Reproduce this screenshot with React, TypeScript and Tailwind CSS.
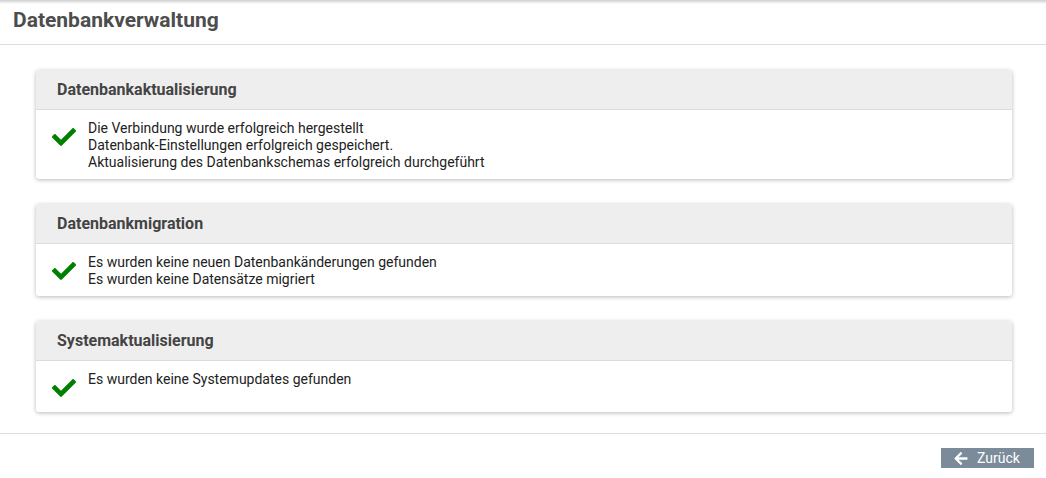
import React from "react";

const Check = () => (
  <svg width="24" height="20" viewBox="0 60 512 392" className="block">
    <path
      fill="#008000"
      d="M173.898 439.404l-166.4-166.4c-9.997-9.997-9.997-26.206 0-36.204l36.203-36.204c9.997-9.998 26.207-9.998 36.204 0L192 312.69 432.095 72.596c9.997-9.997 26.207-9.997 36.204 0l36.203 36.204c9.997 9.997 9.997 26.206 0 36.204l-294.4 294.401c-9.998 9.997-26.207 9.997-36.204-.001z"
    />
  </svg>
);

const Card = ({ title, lines }: { title: string; lines: string[] }) => (
  <div className="bg-white rounded-[3px] shadow-[0_1px_4px_rgba(0,0,0,0.28)]">
    <div className="h-10 bg-[#eeeeee] border-b border-[#dcdcdc] rounded-t-[3px] flex items-center px-[21px] text-[16px] font-bold text-[#444444] pt-[1px]">
      {title}
    </div>
    <div className="flex pt-[9px] pb-[9px]">
      <div className="w-[52px] pl-[16px] pt-[8px] min-h-[33px] shrink-0">
        <Check />
      </div>
      <div className="text-[14px] leading-[17px] text-[#222222] pt-[1px] -mb-[1px]">
        {lines.map((l) => (
          <div key={l}>{l}</div>
        ))}
      </div>
    </div>
  </div>
);

export default function App() {
  return (
    <div className="w-[1046px] h-[478px] bg-white relative" style={{ fontFamily: "Roboto, 'Liberation Sans', sans-serif" }}>
      <div className="h-[45px] border-b border-[#dddddd] flex items-center px-[13px] relative">
        <div className="absolute inset-x-0 top-0 h-[4px] bg-gradient-to-b from-[#cfcfcf] to-white" />
        <h1 className="text-[21px] font-bold text-[#4d4d4d] relative -mt-[3px]">Datenbankverwaltung</h1>
      </div>
      <div className="pl-[36px] pr-[34px] pt-[25px] flex flex-col gap-[25px] h-[388px]">
        <Card
          title="Datenbankaktualisierung"
          lines={[
            "Die Verbindung wurde erfolgreich hergestellt",
            "Datenbank-Einstellungen erfolgreich gespeichert.",
            "Aktualisierung des Datenbankschemas erfolgreich durchgeführt",
          ]}
        />
        <Card
          title="Datenbankmigration"
          lines={["Es wurden keine neuen Datenbankänderungen gefunden", "Es wurden keine Datensätze migriert"]}
        />
        <Card title="Systemaktualisierung" lines={["Es wurden keine Systemupdates gefunden"]} />
      </div>
      <div className="border-t border-[#dddddd] flex justify-end pr-[12px] pt-[14px]">
        <button className="h-[20px] w-[93px] bg-[#7b8b99] text-white text-[14px] flex items-center justify-center gap-[8px] pr-[2px]">
          <svg width="16" height="15" viewBox="0 0 448 512" fill="white">
            <path d="M257.5 445.1l-22.2 22.2c-9.4 9.4-24.6 9.4-33.9 0L7 273c-9.4-9.4-9.4-24.6 0-33.9L201.4 44.7c9.4-9.4 24.6-9.4 33.9 0l22.2 22.2c9.5 9.5 9.3 25-.4 34.3L136.6 216H424c13.3 0 24 10.7 24 24v32c0 13.3-10.7 24-24 24H136.6l120.5 114.8c9.8 9.3 10 24.8.4 34.3z" />
          </svg>
          <span>Zurück</span>
        </button>
      </div>
    </div>
  );
}
